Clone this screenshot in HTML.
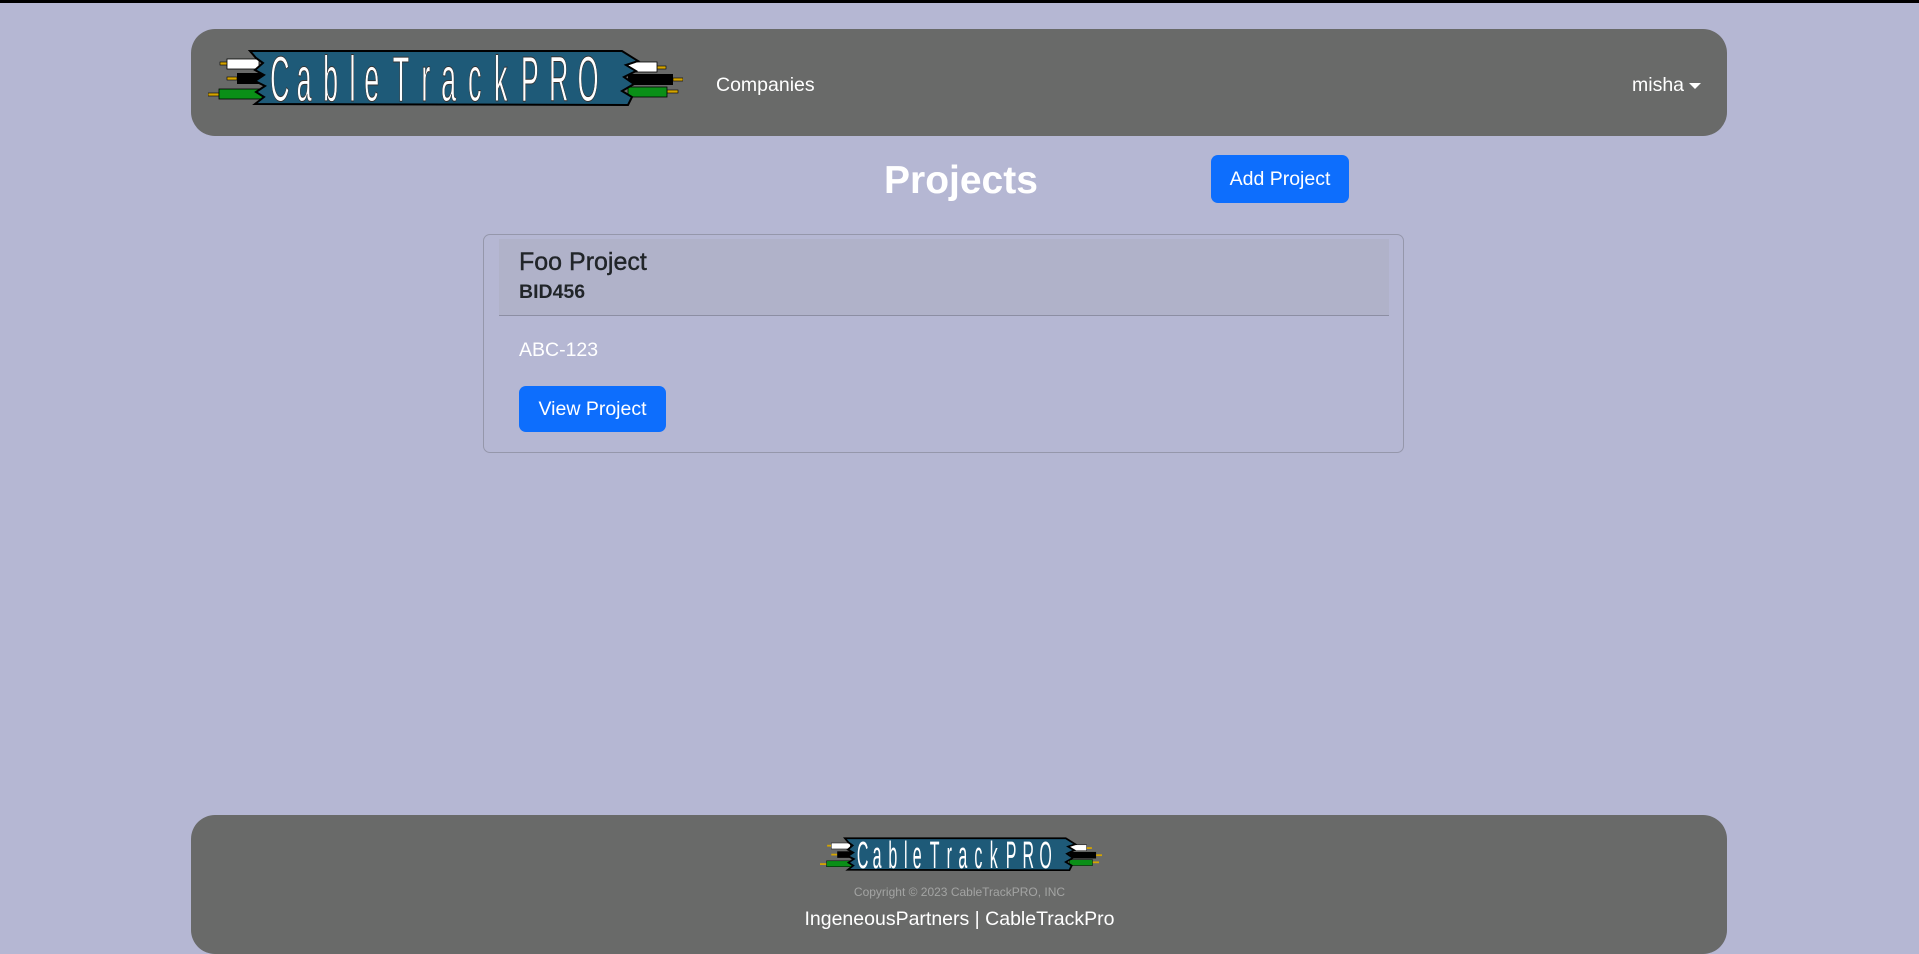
<!DOCTYPE html>
<html><head><meta charset="utf-8">
<style>
*{box-sizing:border-box;margin:0;padding:0}
html,body{width:1919px;height:954px;overflow:hidden}
body{background:#b5b7d3;font-family:"Liberation Sans","DejaVu Sans",sans-serif;position:relative}
.bar{position:absolute;left:0;top:0;width:1919px;height:3px;background:#000}
.nav{position:absolute;left:191px;top:29px;width:1536px;height:107px;background:#696a69;border-radius:24px}
.abs{position:absolute}
.w{color:#fff}
.btn{position:absolute;background:#0d6efd;color:#fff;border-radius:7px;font-size:19.5px;display:flex;align-items:center;justify-content:center}
.card{position:absolute;left:483px;top:234px;width:921px;height:219px;border:1px solid #9597ab;border-radius:7px}
.ch{position:absolute;left:15px;top:4px;width:890px;height:77px;background:#b0b2c9;border-bottom:1px solid #8c8ea3}
.foot{position:absolute;left:191px;top:815px;width:1536px;height:139px;background:#696a69;border-radius:24px}
</style></head><body>
<div class="bar"></div>
<div class="nav"></div>
<svg class="abs" style="left:208px;top:49px" width="475" height="57" viewBox="0 0 475 57">
<rect x="12" y="13" width="8" height="3" fill="#d4a400" stroke="#000" stroke-width=".6"/>
<rect x="19" y="10" width="32" height="10" fill="#fff" stroke="#000" stroke-width=".8"/>
<rect x="19" y="28" width="10" height="3" fill="#d4a400" stroke="#000" stroke-width=".6"/>
<rect x="29" y="24" width="28" height="11" fill="#000"/>
<rect x="0" y="44" width="11" height="3" fill="#d4a400" stroke="#000" stroke-width=".6"/>
<rect x="11" y="40" width="47" height="10" fill="#0a8f17" stroke="#000" stroke-width=".8"/>
<rect x="449" y="17" width="9" height="3" fill="#d4a400" stroke="#000" stroke-width=".6"/>
<rect x="415" y="13" width="34" height="10" fill="#fff" stroke="#000" stroke-width=".8"/>
<rect x="465" y="29" width="10" height="3" fill="#d4a400" stroke="#000" stroke-width=".6"/>
<rect x="420" y="25" width="45" height="11" fill="#000"/>
<rect x="459" y="41" width="11" height="3" fill="#d4a400" stroke="#000" stroke-width=".6"/>
<rect x="420" y="38" width="39" height="10" fill="#0a8f17" stroke="#000" stroke-width=".8"/>
<polygon points="42,2 414,2 430,12 418,16 428,22 416,28 426,35 414,42 424,48 420,56 47,55 56,48 48,43 57,37 47,32 56,26 47,21 55,14 48,9" fill="#1e5a78" stroke="#000" stroke-width="2"/>
<g transform="scale(0.42,1)" fill="#fff" stroke="#333" stroke-width="1" font-family="Liberation Sans" font-size="64">
<text y="52">
<tspan x="148">C</tspan><tspan x="211">a</tspan><tspan x="274">b</tspan><tspan x="337">l</tspan><tspan x="372">e</tspan><tspan x="440">T</tspan><tspan x="508">r</tspan><tspan x="555">a</tspan><tspan x="619">c</tspan><tspan x="681">k</tspan><tspan x="745">P</tspan><tspan x="812">R</tspan><tspan x="880">O</tspan>
</text></g>
</svg>
<div class="abs w" style="left:716px;top:74px;font-size:19.5px">Companies</div>
<div class="abs w" style="left:1632px;top:74px;font-size:19.5px">misha</div>
<div class="abs" style="left:1689px;top:83px;width:0;height:0;border-left:6px solid transparent;border-right:6px solid transparent;border-top:6px solid #fff"></div>

<div class="abs w" style="left:884px;top:159px;font-size:39px;font-weight:bold">Projects</div>
<div class="btn" style="left:1211px;top:155px;width:138px;height:48px">Add Project</div>

<div class="card">
<div class="ch">
<div class="abs" style="left:20px;top:9px;font-size:25px;color:#212529;-webkit-text-stroke:0.4px #212529">Foo Project</div>
<div class="abs" style="left:20px;top:42px;font-size:19.5px;font-weight:bold;color:#212529">BID456</div>
</div>
<div class="abs w" style="left:35px;top:104px;font-size:19.5px">ABC-123</div>
<div class="btn" style="left:35px;top:151px;width:147px;height:46px">View Project</div>
</div>

<div class="foot"></div>
<svg class="abs" style="left:820px;top:837px" width="282" height="34" viewBox="0 0 475 57">
<rect x="12" y="13" width="8" height="3" fill="#d4a400"/>
<rect x="19" y="10" width="32" height="10" fill="#fff" stroke="#000" stroke-width=".8"/>
<rect x="19" y="28" width="10" height="3" fill="#d4a400"/>
<rect x="29" y="24" width="28" height="11" fill="#000"/>
<rect x="0" y="44" width="11" height="3" fill="#d4a400"/>
<rect x="11" y="40" width="47" height="10" fill="#0a8f17" stroke="#000" stroke-width=".8"/>
<rect x="449" y="17" width="9" height="3" fill="#d4a400"/>
<rect x="415" y="13" width="34" height="10" fill="#fff" stroke="#000" stroke-width=".8"/>
<rect x="465" y="29" width="10" height="3" fill="#d4a400"/>
<rect x="420" y="25" width="45" height="11" fill="#000"/>
<rect x="459" y="41" width="11" height="3" fill="#d4a400"/>
<rect x="420" y="38" width="39" height="10" fill="#0a8f17" stroke="#000" stroke-width=".8"/>
<polygon points="42,2 414,2 430,12 418,16 428,22 416,28 426,35 414,42 424,48 420,56 47,55 56,48 48,43 57,37 47,32 56,26 47,21 55,14 48,9" fill="#1e5a78" stroke="#000" stroke-width="3"/>
<g transform="scale(0.42,1)" fill="#fff" font-family="Liberation Sans" font-size="64">
<text y="52">
<tspan x="148">C</tspan><tspan x="211">a</tspan><tspan x="274">b</tspan><tspan x="337">l</tspan><tspan x="372">e</tspan><tspan x="440">T</tspan><tspan x="508">r</tspan><tspan x="555">a</tspan><tspan x="619">c</tspan><tspan x="681">k</tspan><tspan x="745">P</tspan><tspan x="812">R</tspan><tspan x="880">O</tspan>
</text></g>
</svg>
<div class="abs" style="left:0;width:1919px;text-align:center;top:885px;font-size:12px;color:#a3a4a3">Copyright © 2023 CableTrackPRO, INC</div>
<div class="abs w" style="left:0;width:1919px;text-align:center;top:908px;font-size:19.5px">IngeneousPartners | CableTrackPro</div>
</body></html>
